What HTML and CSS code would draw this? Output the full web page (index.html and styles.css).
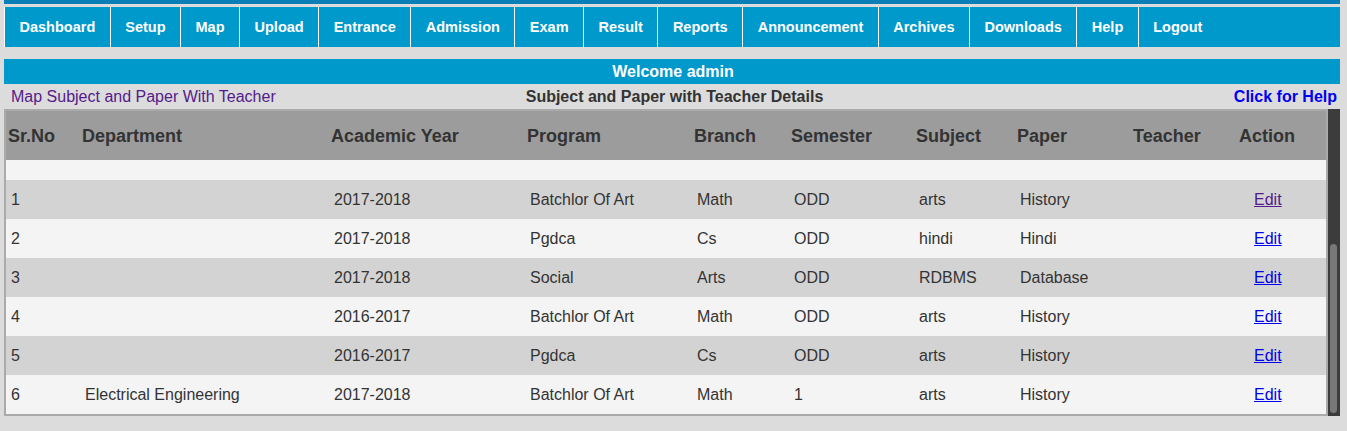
FILE: index.html
```html
<!DOCTYPE html>
<html lang="en">
<head>
<meta charset="utf-8">
<title>Subject and Paper with Teacher Details</title>
<link rel="stylesheet" href="styles.css">
</head>
<body>
<div class="page">
  <div class="topstrip"></div>
  <nav class="nav">
    <a class="nav-item" href="#">Dashboard</a>
    <a class="nav-item" href="#">Setup</a>
    <a class="nav-item" href="#">Map</a>
    <a class="nav-item" href="#">Upload</a>
    <a class="nav-item" href="#">Entrance</a>
    <a class="nav-item" href="#">Admission</a>
    <a class="nav-item" href="#">Exam</a>
    <a class="nav-item" href="#">Result</a>
    <a class="nav-item" href="#">Reports</a>
    <a class="nav-item" href="#">Announcement</a>
    <a class="nav-item" href="#">Archives</a>
    <a class="nav-item" href="#">Downloads</a>
    <a class="nav-item" href="#">Help</a>
    <a class="nav-item" href="#">Logout</a>
  </nav>
  <div class="welcome">Welcome admin</div>
  <div class="subbar">
    <span class="crumb">Map Subject and Paper With Teacher</span>
    <span class="title">Subject and Paper with Teacher Details</span>
    <a class="help" href="#">Click for Help</a>
  </div>
  <div class="tablewrap">
    <div class="tablebox">
      <table class="grid">
        <colgroup>
          <col class="c1"><col class="c2"><col class="c3"><col class="c4"><col class="c5">
          <col class="c6"><col class="c7"><col class="c8"><col class="c9"><col class="c10">
        </colgroup>
        <thead>
          <tr>
            <th>Sr.No</th><th>Department</th><th>Academic Year</th><th>Program</th><th>Branch</th>
            <th>Semester</th><th>Subject</th><th>Paper</th><th>Teacher</th><th>Action</th>
          </tr>
        </thead>
        <tbody>
          <tr class="blank"><td colspan="10"></td></tr>
          <tr class="odd"><td>1</td><td></td><td>2017-2018</td><td>Batchlor Of Art</td><td>Math</td><td>ODD</td><td>arts</td><td>History</td><td></td><td class="act"><a class="visited" href="#">Edit</a></td></tr>
          <tr class="even"><td>2</td><td></td><td>2017-2018</td><td>Pgdca</td><td>Cs</td><td>ODD</td><td>hindi</td><td>Hindi</td><td></td><td class="act"><a href="#">Edit</a></td></tr>
          <tr class="odd"><td>3</td><td></td><td>2017-2018</td><td>Social</td><td>Arts</td><td>ODD</td><td>RDBMS</td><td>Database</td><td></td><td class="act"><a href="#">Edit</a></td></tr>
          <tr class="even"><td>4</td><td></td><td>2016-2017</td><td>Batchlor Of Art</td><td>Math</td><td>ODD</td><td>arts</td><td>History</td><td></td><td class="act"><a href="#">Edit</a></td></tr>
          <tr class="odd"><td>5</td><td></td><td>2016-2017</td><td>Pgdca</td><td>Cs</td><td>ODD</td><td>arts</td><td>History</td><td></td><td class="act"><a href="#">Edit</a></td></tr>
          <tr class="even"><td>6</td><td>Electrical Engineering</td><td>2017-2018</td><td>Batchlor Of Art</td><td>Math</td><td>1</td><td>arts</td><td>History</td><td></td><td class="act"><a href="#">Edit</a></td></tr>
        </tbody>
      </table>
    </div>
    <div class="scrollbar"><div class="thumb"></div></div>
  </div>
</div>
</body>
</html>
```
FILE: styles.css
```css
html, body {
  margin: 0;
  padding: 0;
  background: #dcdcdc;
}
body {
  font-family: "Liberation Sans", Arial, sans-serif;
  color: #333;
}
.page {
  padding: 0 7px 0 4px;
}
.topstrip {
  height: 4px;
  background: #0a7fb7;
}
.nav {
  margin-top: 3px;
  height: 40px;
  background: #0099cc;
  display: flex;
  align-items: stretch;
}
.nav-item {
  display: flex;
  align-items: center;
  padding: 0 14.5px;
  border-left: 1px solid #ffffff;
  color: #ffffff;
  font-weight: bold;
  font-size: 14.5px;
  text-decoration: none;
}
.welcome {
  margin-top: 12px;
  height: 25px;
  line-height: 25px;
  background: #0099cc;
  color: #ffffff;
  font-weight: bold;
  font-size: 16px;
  text-align: center;
  padding-left: 2px;
}
.subbar {
  height: 25px;
  line-height: 25px;
  font-size: 16px;
  display: grid;
  grid-template-columns: 1fr auto 1fr;
}
.crumb {
  color: #551a8b;
  padding-left: 7px;
}
.title {
  font-weight: bold;
  color: #333;
  padding-left: 5px;
}
.help {
  justify-self: end;
  padding-right: 3px;
  color: #0000ee;
  font-weight: bold;
  font-size: 16px;
  text-decoration: none;
}
.tablewrap {
  display: flex;
}
.tablebox {
  border: 2px solid #aaaaaa;
  width: 1320px;
}
.scrollbar {
  width: 12px;
  background: #3c3c3c;
  display: flex;
  flex-direction: column;
  justify-content: flex-end;
  padding: 0 3px 3px 2px;
  box-sizing: border-box;
}
.thumb {
  height: 169px;
  background: #787878;
  border-radius: 4px;
}
.grid {
  width: 1320px;
  table-layout: fixed;
  border-collapse: collapse;
  border-spacing: 0;
}
.c1 { width: 74px; }
.c2 { width: 249px; }
.c3 { width: 196px; }
.c4 { width: 167px; }
.c5 { width: 97px; }
.c6 { width: 125px; }
.c7 { width: 101px; }
.c8 { width: 116px; }
.c9 { width: 106px; }
.c10 { width: 89px; }
.grid th {
  height: 49px;
  padding: 2px 0 0 2px;
  box-sizing: border-box;
  background: #9c9c9c;
  color: #333;
  font-size: 18px;
  font-weight: bold;
  text-align: left;
  vertical-align: middle;
}
.grid td {
  height: 39px;
  padding: 0 0 0 5px;
  font-size: 16px;
  color: #333;
  vertical-align: middle;
  white-space: nowrap;
}
.grid tr.blank td {
  height: 20px;
  padding: 0;
  background: #f4f4f4;
}
.grid tr.odd td {
  background: #d3d3d3;
}
.grid tr.even td {
  background: #f4f4f4;
}
.grid td.act {
  padding-left: 17px;
}
.grid td.act a {
  color: #0000ee;
  text-decoration: underline;
}
.grid td.act a.visited {
  color: #551a8b;
}
```
